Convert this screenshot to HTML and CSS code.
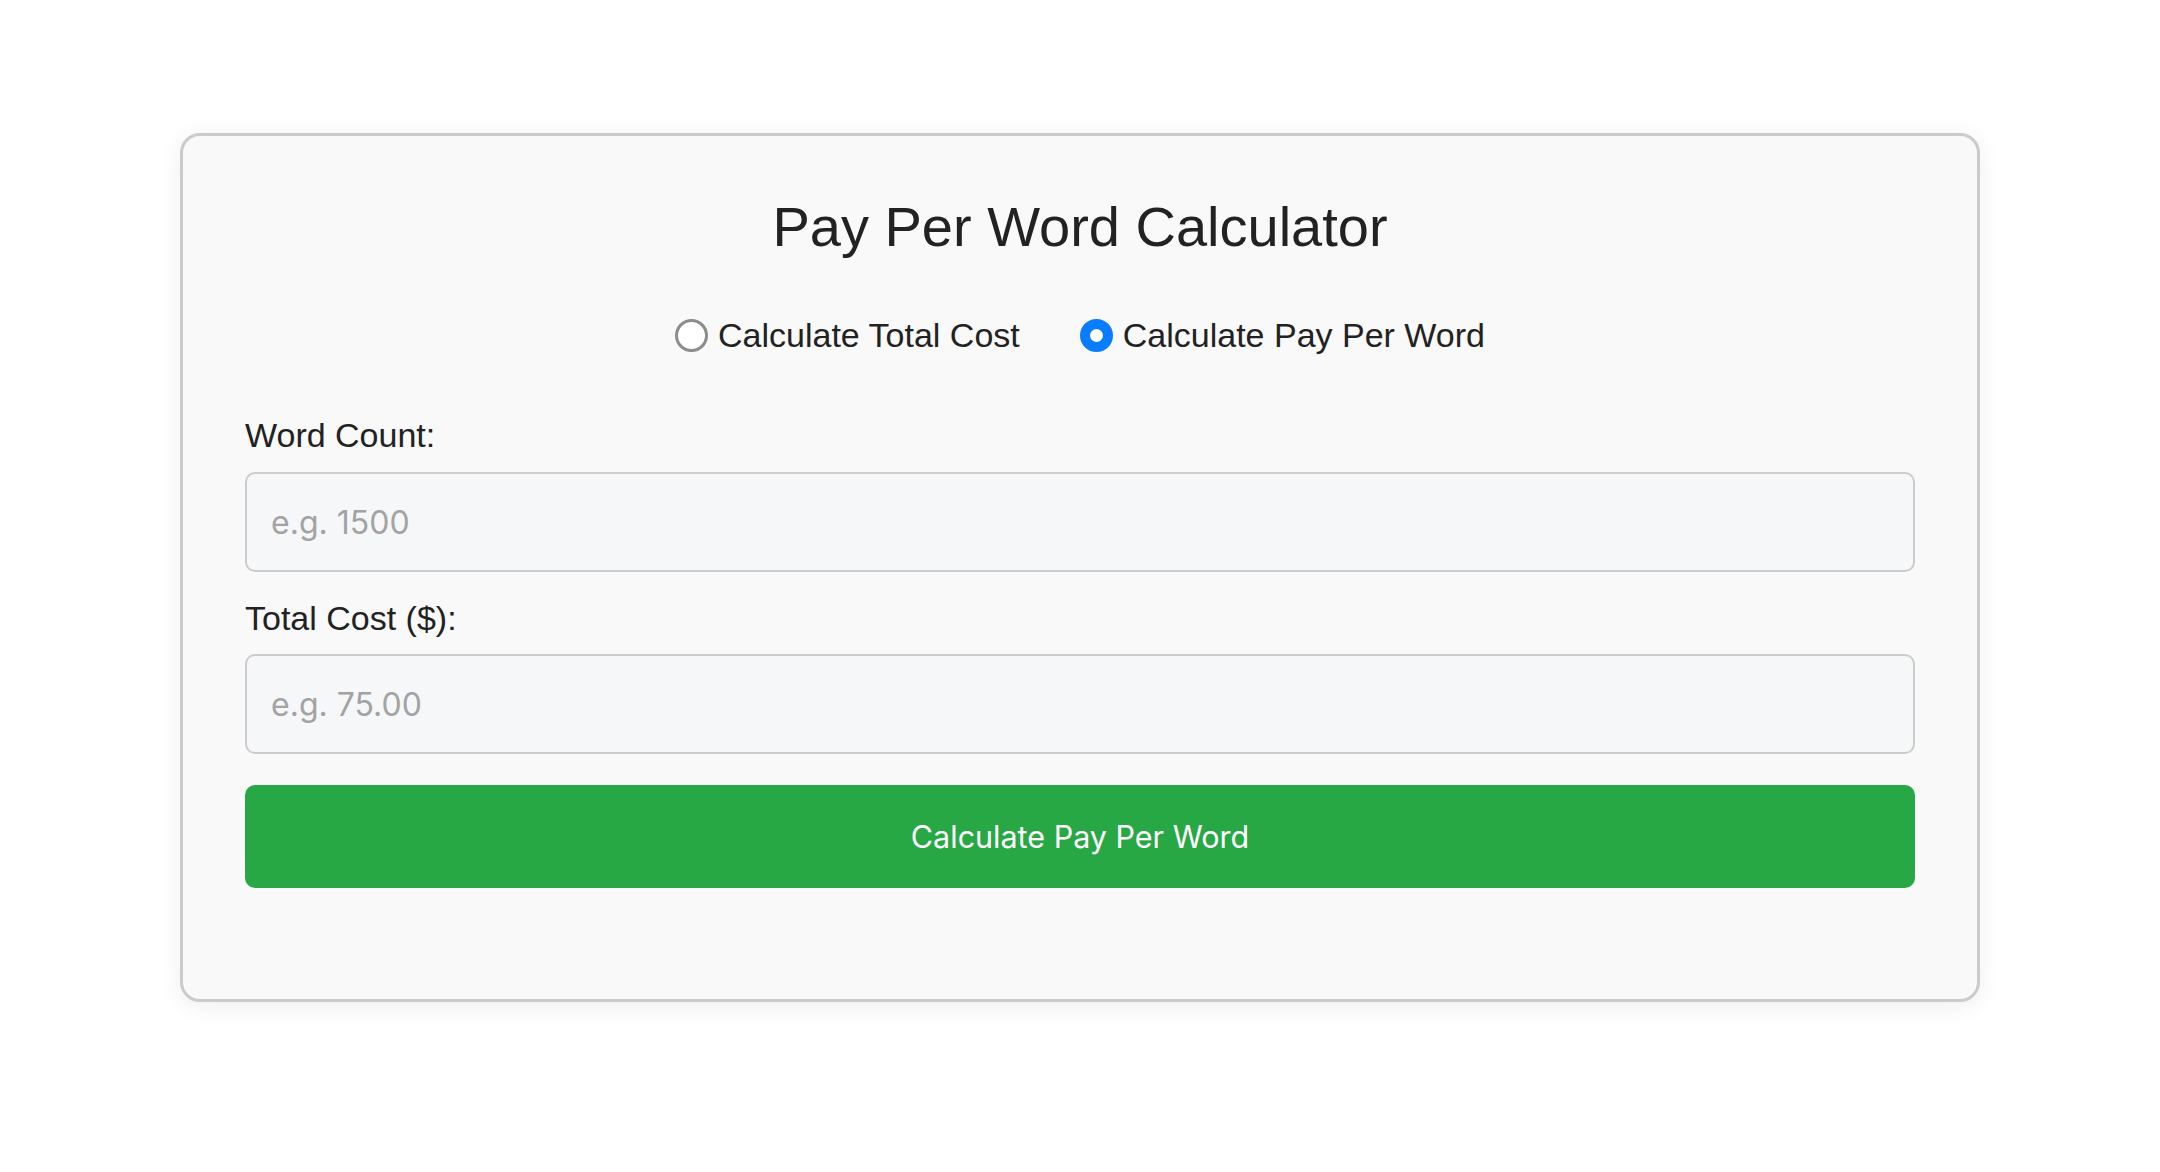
FILE: index.html
```html
<!DOCTYPE html>
<html lang="en">
<head>
  <meta charset="UTF-8">
  <title>Pay Per Word Calculator</title>
  <meta name="viewport" content="width=device-width, initial-scale=1.0">
  <link rel="stylesheet" href="styles.css">
</head>
<body>

<div class="calculator">
  <h1>Pay Per Word Calculator</h1>

  <div class="mode-switch">
    <label class="mode">
      <input type="radio" name="mode" value="total">
      <span>Calculate Total Cost</span>
    </label>
    <label class="mode">
      <input type="radio" name="mode" value="rate" checked>
      <span>Calculate Pay Per Word</span>
    </label>
  </div>

  <div class="field">
    <label for="wordCount">Word Count:</label>
    <input type="number" id="wordCount" placeholder="e.g. 1500">
  </div>

  <div class="field">
    <label for="totalCost">Total Cost ($):</label>
    <input type="number" id="totalCost" placeholder="e.g. 75.00">
  </div>

  <button id="calcBtn">Calculate Pay Per Word</button>

  <div id="result"></div>
</div>

</body>
</html>
```

FILE: styles.css
```css
body {
  margin: 0;
  background: #fff;
  font-family: 'Liberation Sans', Arial, sans-serif;
  color: #222;
}
.calculator {
  box-sizing: border-box;
  width: 1800px;
  margin: 133px auto;
  padding: 59px 62px 62px;
  background: #f9f9f9;
  border: 3px solid #cbcbcb;
  border-radius: 20px;
  box-shadow: 0 4px 24px rgba(0,0,0,0.07);
}
h1 {
  margin: 0;
  font-size: 56px;
  line-height: 64px;
  font-weight: normal;
  text-align: center;
  color: #222;
}
.mode-switch {
  display: flex;
  justify-content: center;
  gap: 60px;
  margin-top: 56px;
}
.mode {
  display: flex;
  align-items: center;
  gap: 10px;
  font-size: 34px;
  line-height: 40px;
  cursor: pointer;
}
.mode input {
  appearance: none;
  -webkit-appearance: none;
  box-sizing: border-box;
  width: 33px;
  height: 33px;
  margin: 0;
  border: 3px solid #8c8c8c;
  border-radius: 50%;
  background: #fff;
}
.mode input:checked {
  border: 10px solid #0a7cff;
}
.field {
  margin-top: 60px;
}
.field + .field {
  margin-top: 26px;
}
.field label {
  display: block;
  font-size: 34px;
  line-height: 40px;
  margin-bottom: 17px;
}
.field + .field label {
  margin-bottom: 16px;
}
.field input {
  box-sizing: border-box;
  display: block;
  width: 100%;
  height: 100px;
  padding: 0 24px;
  font-family: Inter, 'Liberation Sans', sans-serif;
  font-size: 32px;
  color: #222;
  background: #f6f7f9;
  border: 2px solid #cccccc;
  border-radius: 10px;
  outline: none;
}
.field input::placeholder {
  color: #a3a3a3;
}
#calcBtn {
  display: block;
  width: 100%;
  height: 103px;
  margin-top: 31px;
  font-family: Inter, 'Liberation Sans', sans-serif;
  font-size: 30.5px;
  color: #fff;
  background: #28a745;
  border: none;
  border-radius: 10px;
  cursor: pointer;
}
#result {
  min-height: 49px;
}
```
